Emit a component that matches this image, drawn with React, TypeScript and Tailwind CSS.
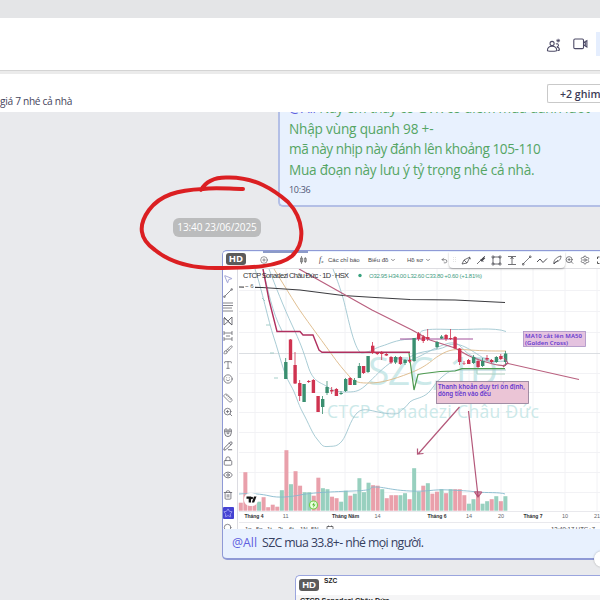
import {
  Brush,
  ChevronDown,
  CirclePlus,
  Eye,
  Lock,
  Magnet,
  MousePointer2,
  PencilLine,
  Ruler,
  Search,
  Settings,
  Smile,
  Star,
  Trash2,
  Type,
  Undo2,
  ZoomIn,
} from "lucide-react";

const UP = "#3a8f70";
const DOWN = "#cf3350";

// x, high, low, body top, body bottom, up
const candles: [number, number, number, number, number, boolean][] = [
  [285.7, 358, 379, 362, 379, true],
  [290.4, 339, 360, 339.5, 360, false],
  [295, 352, 384, 365, 383.5, false],
  [299.7, 380, 401, 383, 396, false],
  [304, 384, 402, 384, 402, true],
  [308.7, 380, 383, 381, 382, false],
  [313.3, 379, 393, 380, 393, false],
  [318, 396, 412, 396, 412, false],
  [322.6, 396, 414, 399, 407, true],
  [327, 381, 395, 387, 393, true],
  [331.7, 387, 394, 390, 391.5, false],
  [336.3, 388, 396, 389, 396, false],
  [341, 391, 395, 393, 394, true],
  [345.6, 378, 392, 379, 391, true],
  [350, 377, 385, 378, 385, false],
  [354.6, 378, 385, 380, 385, true],
  [359.3, 363, 378, 366, 378, true],
  [363.5, 366, 374, 366, 373, false],
  [368, 356, 373, 356, 372, true],
  [372.6, 342, 354, 345.7, 353, false],
  [377.2, 352, 355, 353, 354, false],
  [381.7, 351, 360, 352.5, 354, false],
  [386.3, 353, 356, 354, 355.5, false],
  [391, 356, 364, 357, 362.5, false],
  [395.6, 356, 364, 357, 362.5, true],
  [400.3, 356, 365, 357, 364, false],
  [405, 359, 365, 360, 363, true],
  [409.5, 357, 363, 360, 361.5, false],
  [414, 338, 362, 338, 361, true],
  [418.6, 332, 341, 333.5, 339, false],
  [423.2, 335, 343, 336.5, 341, false],
  [427.7, 329, 341, 337, 339, false],
  [437, 341, 349, 342, 347, true],
  [441.6, 335, 339, 336.5, 338.5, true],
  [446, 334, 341, 335, 339, false],
  [450.6, 329, 340, 338, 339, false],
  [455, 336, 349, 337, 348.5, false],
  [459.6, 348, 365, 348.5, 362, false],
  [464, 361, 365, 363.5, 364, false],
  [468.6, 359, 364, 360, 364, false],
  [473.5, 355, 364, 357, 363, true],
  [478, 360, 368, 361, 367, false],
  [482.6, 358, 367, 361, 366, true],
  [487, 355, 361, 358, 359.5, false],
  [491.6, 359, 363, 360, 362, false],
  [496.3, 356, 363, 357, 362, true],
  [500.8, 354, 360, 356, 359, false],
  [505.5, 351, 366, 353.5, 362, true],
];

// negative values are sessions that closed lower
const volumes = [
  -8, -38.5, -11, -10, 9, -13.5, -3.5, -6, -4, 20.5, -60.5, 26.5, -39.5, -25,
  18.5, 18.5, -15, -33, 22.5, 21.5, -14, -12.5, 9, 20, -15, 17, 32.5, 18.5, 28,
  -25.5, -25, 21.5, -12.5, -15.5, -15.5, 15.5, 17.5, -11.5, 42.5, 19, -25, 27.5,
  -17, -19, 21.5, -17.5, 21.5, -21.5, -21.5, -15.5, 7, 11.5, -15.5, 7, 9.5,
  -11.5, 14.5, -9.5, 14.5,
];

const timeLabels: [number, string, boolean][] = [
  [254, "Tháng 4", true],
  [285.7, "11", false],
  [345.5, "Tháng Năm", true],
  [377.5, "14", false],
  [437, "Tháng 6", true],
  [469, "14", false],
  [501, "20", false],
  [533, "Tháng 7", true],
  [565, "10", false],
  [597, "21", false],
];

const ranges = ["1n", "5n", "1t", "3t", "6t", "1N", "5N"];

const gridX = [255, 286, 345, 378, 437, 469, 501, 533, 565, 597];
const gridY = [290.5, 311.5, 332.5, 373.5, 392.5, 412.5, 432.5, 452.5, 472.5, 492.5];

const TopBar = () => {
  return (
    <header className="shrink-0">
      <div className="h-[18px] bg-[#e4e5e7]" />
      <div className="h-[52px] bg-white flex items-center justify-end">
        <svg className="w-[15px] h-[15px] mt-[2px] mr-3" viewBox="0 0 16 16" fill="none" stroke="#4c4a66" strokeWidth="1.1">
          <circle cx="6.5" cy="5.8" r="2.2" />
          <path d="M1.5 13.500c0-3 1.700-4.700 5-4.700s5 1.700 5 4.700c-2.500.6-7.500.6-10 0Z" />
          <path d="M10.500 6.500a1.700 1.700 0 1 1 1 3c1.900.1 2.800 1.500 2.800 3.300-.5.4-1.300.5-2 .5" />
          <path d="M13 .8v4M11 2.800h4M11.700 1.500l2.600 2.600M14.300 1.500l-2.600 2.600" strokeWidth=".9" />
        </svg>
        <svg className="w-[15px] h-4 mr-2" viewBox="0 0 15 16" fill="none" stroke="#4c4a66" strokeWidth="1.1">
          <rect x=".8" y="3" width="9.7" height="9.6" rx="1.2" />
          <path d="M10.500 6.800l1.800-1.200v4.400l-1.800-1.200M12.300 5.500l1.600-.9v6.400l-1.600-.9" />
        </svg>
        <div className="w-1 h-6 bg-[#e5eefe]" />
      </div>
      <div className="h-1 bg-[#ebebeb] border-t border-[#d4d4d4]" />
    </header>
  );
};

const PinnedBar = () => {
  return (
    <div className="h-[38px] shrink-0 bg-white flex justify-between">
      <p className="pt-[20px] text-[10.2px] leading-[14px] tracking-[-0.32px] text-[#46455c] whitespace-nowrap">
        giá 7 nhé cả nhà
      </p>
      <div className="mt-[10px] h-[19px] w-[53px] border border-r-0 border-[#c9c9c9] rounded-l-xs pl-3 text-[10.6px] leading-[19px] font-semibold text-[#3c3b55] whitespace-nowrap">
        +2 ghim
      </div>
    </div>
  );
};

const HdBadge = () => {
  return (
    <span className="bg-[#5b5b5b] text-white text-[9.5px] font-bold leading-[12px] rounded-[3px] w-[20px] h-[12px] text-center">
      HD
    </span>
  );
};

const ChartToolbar = () => {
  return (
    <div className="relative h-[17px] bg-white flex items-center text-[6px] text-[#46464c] whitespace-nowrap border-b border-[#dedee2] font-['Liberation_Sans',sans-serif]">
      <CirclePlus className="ml-[37px] w-2 h-2 shrink-0" strokeWidth={1.6} />
      <svg className="ml-[32px] w-[7px] h-2 shrink-0" viewBox="0 0 7 8" fill="none" stroke="#666" strokeWidth=".7">
        <path d="M1.500 0v8M5.300 1v6M.5 2h2v4h-2zM4.300 2.500h2v3h-2z" />
      </svg>
      <span className="ml-[12px] w-[9px] shrink-0 text-[8px] italic font-['Liberation_Serif',serif]">
        f<sub className="text-[5px]">x</sub>
      </span>
      <span className="w-[31px] shrink-0">Các chỉ báo</span>
      <span className="ml-[9px] w-[21px] shrink-0">Biểu đồ</span>
      <ChevronDown className="ml-[1px] w-[6px] h-[6px] shrink-0" strokeWidth={2.5} />
      <span className="ml-[11px] w-[17px] shrink-0">Hồ sơ</span>
      <ChevronDown className="ml-[1px] w-[6px] h-[6px] shrink-0" strokeWidth={2.5} />
      <Undo2 className="ml-[10px] w-[7px] h-[7px] shrink-0" strokeWidth={2} />
      <div className="absolute left-[226px] top-0 w-[116px] h-[16px] bg-white rounded-b-sm shadow-[0_1px_2px_rgba(0,0,0,0.3)]">
        <svg width="116" height="16" viewBox="449 252 116 16" fill="none" stroke="#4c4c52" strokeWidth=".8">
          <path d="M453.500 257v6M455.500 257v6" stroke="#ddd" strokeDasharray="1 1" />
          <path d="M462 264l2-4 6-3-3 6zM464 260l3 3M469 258l2 1" />
          <path d="M477 264l8-8M480.500 259l3 3" />
          <path d="M481 261l3.500-3.500" strokeWidth="2.2" />
          <rect x="493" y="257" width="7" height="7" />
          <path d="M492 256h2v2h-2zM499 256h2v2h-2zM492 263h2v2h-2zM499 263h2v2h-2z" strokeWidth=".6" />
          <path d="M508 256.500h8M508 264.500h8M512 257v7M510.500 259l1.500-2 1.500 2" />
          <path d="M523 264l7-7M522.500 263.500h1.500v1.500h-1.500zM529.500 256h1.500v1.500h-1.500z" strokeWidth=".7" />
          <path d="M537 262l3-3 3 3.500 4-4" strokeWidth="1" />
          <path d="M554 264c-1-3 2-7 7-8 0 4-3 6-6 6zM554 264l4-4" />
        </svg>
      </div>
      <div className="absolute left-[342px] top-[3px] flex gap-[6px]">
        <ZoomIn className="w-[9px] h-[10px]" strokeWidth={1.8} />
        <Settings className="w-[10px] h-[10px]" strokeWidth={1.6} />
        <svg width="8" height="10" viewBox="0 0 8 10" fill="none" stroke="#444" strokeWidth=".9">
          <path d="M1.500 4v-2h2M1.500 6.500v2h2" />
        </svg>
      </div>
    </div>
  );
};

const DrawingTools = () => {
  return (
    <div className="w-[15px] pr-[4px] shrink-0 h-[260px] overflow-hidden bg-white border-r border-[#dcdce2] flex flex-col items-center text-[#64646d] [&_svg]:shrink-0 [&_svg]:w-[10px] [&_svg]:h-[10px]">
      <MousePointer2 className="mt-[5px] text-[#7476bf]" strokeWidth={1.5} />
      <svg className="mt-[4px]" viewBox="0 0 10 10" stroke="currentColor" strokeWidth=".8" fill="none">
        <path d="M2 8l6-6M.8 8h1.300v1.300H.8zM8 .8h1.300v1.300H8z" />
      </svg>
      <svg className="mt-[4px]" viewBox="0 0 10 10" stroke="currentColor" strokeWidth=".8" fill="none">
        <path d="M0 1h10M0 3.500h10M0 6h7M0 9h10M8 5v2" />
      </svg>
      <svg className="mt-[4px]" viewBox="0 0 10 10" stroke="currentColor" strokeWidth=".9" fill="none">
        <path d="M1 1l8 8M1 9V2l4 3 4-4v8L5 5.500z" />
      </svg>
      <svg className="mt-[5px]" viewBox="0 0 10 10" stroke="currentColor" strokeWidth=".8" fill="none">
        <path d="M1 0v4M1 2h8M9 0v4M1 6v4M1 8h8M9 6v4M3 5h4" />
      </svg>
      <Brush className="mt-[4px]" strokeWidth={1.8} />
      <Type className="mt-[5px]" strokeWidth={1.8} />
      <Smile className="mt-[4px]" strokeWidth={1.9} />
      <Ruler className="mt-[9px]" strokeWidth={1.8} />
      <ZoomIn className="mt-[4px]" strokeWidth={1.9} />
      <Magnet className="mt-[10px] rotate-[135deg]" strokeWidth={2} />
      <PencilLine className="mt-[4px]" strokeWidth={2.2} />
      <Lock className="mt-[5px]" strokeWidth={1.9} />
      <Eye className="mt-[4px]" strokeWidth={2} />
      <Trash2 className="mt-[10px]" strokeWidth={1.9} />
      <div className="mt-[7px] w-[11px] h-[12px] shrink-0 bg-[#4542d2] rounded-[1px] flex items-center justify-center text-[#a9a9f5]">
        <Star strokeWidth={2} />
      </div>
      <Search className="mt-[4px]" strokeWidth={1.8} />
    </div>
  );
};

const PriceChart = () => {
  return (
    <svg className="block shrink-0" width="362" height="260" viewBox="238 269 362 260" fontFamily="'Liberation Sans', sans-serif">
      <rect x="238" y="269" width="362" height="260" fill="#fff" />
      <g stroke="#f2f2f5" strokeWidth="1">
        {gridX.map((x) => (
          <line key={x} x1={x} x2={x} y1="269" y2="511" />
        ))}
        {gridY.map((y) => (
          <line key={y} x1="239" x2="600" y1={y} y2={y} />
        ))}
      </g>

      <g fill="#cce9e9" fontFamily="'Open Sans', sans-serif">
        <text x="368" y="385" fontSize="39" textLength="130">SZC, 1D</text>
        <text x="327" y="418" fontSize="17.5" textLength="212">CTCP Sonadezi Châu Đức</text>
      </g>

      {volumes.map((v, i) => (
        <rect
          key={i}
          x={238.8 + i * 4.562}
          y={510.7 - Math.abs(v)}
          width="4"
          height={Math.abs(v)}
          fill={v > 0 ? "#98d0bf" : "#e9a0ab"}
        />
      ))}
      <path
        d="M239 494C250 493 262 494 270 496S290 497 300 495 325 492 353 491 365 487 375 487 390 490 410 491 430 489 450 490 468 491 477 492 500 492 505 494"
        fill="none"
        stroke="#86b9cd"
        strokeWidth=".9"
      />

      <line x1="239" x2="600" y1="353.5" y2="353.5" stroke="#d2d5da" strokeWidth=".8" />

      <g fill="none" stroke="#9fc6d0" strokeWidth=".9">
        <path d="M255 269C262 290 268 320 274 338S283 372 290 384 297 402 303 413 312 433 317 439 322 447 328 446.500 337 447 342 441 350 420 357 413 372 412 387 413.500 398 412 403 409 408 402 413 400 425 397 430 391 436 382 442 377 450 370 460 370H506" />
        <path d="M269 269C275 285 284 308 292 325S303 350 308 366 320 382 326 386 336 392 345 392 358 392 365 386 378 372 390 363 400 361 409 360 425 352 443 345 460 350 472 356 490 362 506 361" />
        <path d="M263 269C268 290 272 312 282 331" />
        <path d="M333 269C338 282 340 288 343 298S350 330 355 343 362 353 367 352 375 348 382 346 395 340 410 339 417 333 422 331 435 329 452 329.500 495 327 506 331.500" />
        <path d="M410 357C420 350 435 352 447 346S470 350 485 359 498 354 506 356" />
      </g>
      <path
        d="M274 269C282 282 290 295 297 306S320 338 330 352 343 369 349 376 360 383 370 383 392 380 410 373 430 361 440 355 455 349 470 350 490 351 506 351"
        fill="none"
        stroke="#dcb886"
        strokeWidth=".9"
      />
      <path d="M239 287L262 287.500 300 290 343 295.500 375 297.500 410 299.500 455 300 505 302.500" fill="none" stroke="#3b3b3f" strokeWidth="1.1" />
      <path d="M299 269L372 310 412 330 430 340 455 348C465 354 475 360 493 364S503 363 508 363.500L579 379.500" fill="none" stroke="#b9607f" strokeWidth="1.2" />
      <path d="M263 269L269 300 277 331.500H300L303 335H313L319 350 322 352.300H410" fill="none" stroke="#b0305f" strokeWidth="1.4" />
      <path d="M409 353L414 390 418 374.500 424 373.500 440 371.500 455 371 462 368.700H505" fill="none" stroke="#4d9a50" strokeWidth="1.2" />
      <path d="M477 369V374H505" fill="none" stroke="#a5cbb8" strokeWidth=".9" />
      <path d="M400 339H473" stroke="#a4519b" strokeWidth="1" />
      <path d="M262 298l3 3M266 325h4M270 353h4M274 378h4" stroke="#8fc3bd" strokeWidth=".8" />

      {candles.map(([x, high, low, top, bottom, up]) => (
        <g key={x} fill={up ? UP : DOWN}>
          <rect x={x - 0.4} y={high} width=".8" height={low - high} />
          <rect x={x - 1.6} y={top} width="3.4" height={bottom - top} />
        </g>
      ))}

      <g fontSize="6.5">
        <rect x="244" y="283" width="11" height="6" fill="#fff" />
        <text x="243" y="278" fontSize="7.4" fill="#2f2f33" textLength="106">CTCP Sonadezi Châu Đức · 1D · HSX</text>
        <circle cx="360" cy="275.5" r="1.7" fill="#39a27e" />
        <text x="369" y="277.500" fontSize="6" fill="#3f9d83" textLength="113">O32.95 H34.00 L32.60 C33.80 +0.60 (+1.81%)</text>
        <text x="245" y="288" fontSize="6" fill="#555">~ 6</text>
      </g>

      <g fontFamily="'Noto Sans', sans-serif" fontWeight="600" fill="#6537cf">
        <rect x="523.5" y="331.5" width="62" height="15" fill="#e4c2df" stroke="#a98fc4" strokeWidth=".8" />
        <text x="525" y="338" fontSize="6" textLength="57">MA10 cắt lên MA50</text>
        <text x="525" y="344.800" fontSize="6" textLength="43">(Golden Cross)</text>
        <rect x="436.5" y="381.5" width="92" height="22" fill="#ebc5d6" stroke="#8d7893" strokeWidth=".8" />
        <text x="438" y="388.500" fontSize="6.2" textLength="87">Thanh khoản duy trì ổn định,</text>
        <text x="438" y="396" fontSize="6.2" textLength="53">dòng tiền vào đều</text>
      </g>

      <g fill="none" stroke="#b4587a" strokeWidth="1.2">
        <path d="M459.500 407L418.500 453.500M417.500 448.500v5.500l6-.5" />
        <path d="M468.500 411L478 496M474.500 492l3.500 5 4-5" />
        <path d="M504 358l4 5M503 367l5-4" />
      </g>
      <path d="M474 491l8 0-4 6z" fill="#b9446a" opacity=".6" />

      <rect x="244" y="493" width="14" height="13" rx="6" fill="#fff" />
      <path d="M246.500 496.500h4.500v6h-2.300v-3.700h-2.200zM254 496.500h2.500l-2.300 6h-2.400z" fill="#151515" />
      <circle cx="251.8" cy="498" r="1.2" fill="#151515" />
      <circle cx="313.5" cy="505" r="4" fill="#e9ffe0" stroke="#76cf4a" strokeWidth="1.2" />
      <path d="M314.500 502l-2.500 3.300h1.700l-.7 2.700 2.600-3.500h-1.700z" fill="#58b82f" />

      <rect x="239" y="511" width="361" height="18" fill="#fff" />
      <path d="M239 511.500H600M239 522.500H600" stroke="#e3e3e8" strokeWidth=".8" />
      <g fontSize="6" textAnchor="middle">
        {timeLabels.map(([x, label, bold]) => (
          <text key={x} x={x} y="518" fontWeight={bold ? 700 : 400} fill={bold ? "#2f2f33" : "#66666c"} fontSize={bold ? 5 : 5.5}>
            {label}
          </text>
        ))}
      </g>
      <g fontSize="6" fill="#44444a">
        {ranges.map((r, i) => (
          <text key={r} x={245 + i * 11} y="531">
            {r}
          </text>
        ))}
        <path d="M327 529v-2.500h6v2.500M328.500 525.500v1.500M331.500 525.500v1.500" fill="none" stroke="#55555b" strokeWidth=".8" />
        <text x="551" y="531" textLength="44">13:40:17 UTC+7</text>
      </g>
    </svg>
  );
};

const App = () => {
  return (
    <div className="relative w-[600px] h-[600px] overflow-hidden flex flex-col bg-[#e9eaed] font-['Open_Sans','Noto_Sans',sans-serif]">
      <TopBar />
      <PinnedBar />
      <main className="flex-1 min-h-0 overflow-hidden flex flex-col">
        <div className="ml-[278px] h-[95px] shrink-0 overflow-hidden bg-[#e8f1fe] border-l-2 border-b-2 border-[#b3bfe6] rounded-bl-[5px] pl-[9px] text-[#55a564] text-[13.6px] leading-[20.5px] whitespace-nowrap flex flex-col justify-end">
          <p className="tracking-[-0.2px]">
            <span className="text-[#605fe0]">@All</span> Này em thấy có GVR có điểm mua đánh lướt
          </p>
          <p className="tracking-[-0.17px]">Nhập vùng quanh 98 +-</p>
          <p className="tracking-[-0.44px]">mã này nhịp này đánh lên khoảng 105-110</p>
          <p className="tracking-[-0.24px]">Mua đoạn này lưu ý tỷ trọng nhé cả nhà.</p>
          <p className="text-[9px] leading-[19px] tracking-[-0.3px] pb-[6px] text-[#4d5674]">10:36</p>
        </div>

        <div className="ml-[173px] mt-[11px] w-[88px] h-[19px] shrink-0 rounded-[6px] bg-[#bbbcbd] text-white text-[10px] font-medium tracking-[-0.12px] leading-[19px] text-center whitespace-nowrap">
          13:40 23/06/2025
        </div>

        <div className="relative ml-[222px] mt-[13px] h-[310px] shrink-0 bg-[#e8f1fe] border border-r-0 border-b-2 border-[#8f9ad6] rounded-l-[5px] pt-[1px] overflow-hidden">
          <ChartToolbar />
          <div className="flex">
            <DrawingTools />
            <PriceChart />
          </div>
          <p className="pl-[9px] pt-[4px] text-[12.3px] leading-[20px] text-[#36405f] whitespace-nowrap">
            <span className="text-[#605fe0]">@All</span>
            <span className="ml-[5px] tracking-[-0.6px]">SZC mua 33.8+- nhé mọi người.</span>
          </p>
          <div className="absolute left-[40px] top-0 w-[45px] h-[2px] bg-[#8c9bc8]" />
          <div className="absolute left-[3px] top-[2px] flex">
            <HdBadge />
          </div>
        </div>

        <div className="h-[15px] shrink-0" />
        <div className="ml-[295px] h-[40px] shrink-0 bg-white border-l border-t border-[#9aa5de] rounded-tl-[5px] pt-[3px] font-['Liberation_Sans',sans-serif] text-[#222] whitespace-nowrap">
          <div className="flex items-start pl-[3px]">
            <HdBadge />
            <span className="ml-[5px] -mt-[3px] text-[6.6px] font-bold leading-[9px]">SZC</span>
          </div>
          <p className="mt-[4px] pl-[4px] text-[7.2px] font-bold leading-[11px] bg-[#f5f5f6]">
            CTCP Sonadezi Châu Đức
          </p>
        </div>
      </main>

      <div className="absolute left-[594px] top-[551px] w-4 h-4 rounded-full bg-white shadow-[0_0_2px_rgba(0,0,0,0.3)]" />

      {/* marker stroke around the date */}
      <svg className="absolute left-0 top-0" width="600" height="600" fill="none" stroke="#db1f22" strokeWidth="4" strokeLinecap="round" strokeLinejoin="round">
        <path d="M201 190C206 181 215 177 228 177.500C255 177 274 190 288 202C304 219 306 243 292 256C279 267 250 268 222 268C195 269 171 263 155 250C139 239 138 225 149 210C160 195 178 190 203 189C215 187 230 189 243 189" />
      </svg>
    </div>
  );
};

export default App;
